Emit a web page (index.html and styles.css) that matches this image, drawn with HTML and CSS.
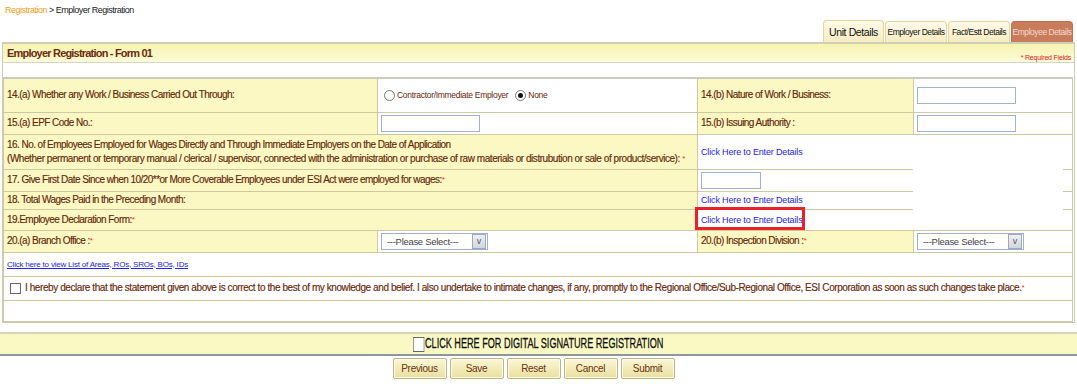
FILE: index.html
```html
<!DOCTYPE html>
<html>
<head>
<meta charset="utf-8">
<link rel="stylesheet" href="styles.css">
</head>
<body>
<div class="crumb"><span class="crumb-link">Registration</span> &gt; Employer Registration</div>
<div class="tabs">
  <div class="tab tab-big">Unit Details</div>
  <div class="tab">Employer Details</div>
  <div class="tab">Fact/Estt Details</div>
  <div class="tab tab-active">Employee Details</div>
</div>
<div class="panel">
  <div class="panel-head">
    <span class="panel-title">Employer Registration - Form 01</span>
    <span class="req">* Required Fields</span>
  </div>
  <div class="panel-body">
    <table class="form">
      <colgroup><col class="c1"><col class="c2"><col class="c3"><col class="c4"></colgroup>
      <tr class="r14">
        <td class="lbl">14.(a) Whether any Work / Business Carried Out Through:</td>
        <td class="val"><span class="radio"></span><span class="small">Contractor/Immediate Employer</span><span class="radio on"></span><span class="small">None</span></td>
        <td class="lbl">14.(b) Nature of Work / Business:</td>
        <td class="val"><span class="inp w100"></span></td>
      </tr>
      <tr class="r15">
        <td class="lbl">15.(a) EPF Code No.:</td>
        <td class="val"><span class="inp w100"></span></td>
        <td class="lbl">15.(b) Issuing Authority :</td>
        <td class="val"><span class="inp w100"></span></td>
      </tr>
      <tr class="r16">
        <td class="lbl" colspan="2">16. No. of Employees Employed for Wages Directly and Through Immediate Employers on the Date of Application<br><span class="wide">(Whether permanent or temporary manual / clerical / supervisor, connected with the administration or purchase of raw materials or distrubution or sale of product/service): </span><span class="star">*</span></td>
        <td class="val" colspan="2"><span class="lnk">Click Here to Enter Details</span></td>
      </tr>
      <tr class="r17">
        <td class="lbl" colspan="2">17. Give First Date Since when 10/20**or More Coverable Employees under ESI Act were employed for wages:<span class="star">*</span></td>
        <td class="val"><span class="inp w60"></span></td>
        <td class="val"></td>
      </tr>
      <tr class="r18">
        <td class="lbl" colspan="2">18. Total Wages Paid in the Preceding Month:</td>
        <td class="val"><span class="lnk">Click Here to Enter Details</span></td>
        <td class="val"></td>
      </tr>
      <tr class="r19">
        <td class="lbl" colspan="2">19.Employee Declaration Form:<span class="star">*</span></td>
        <td class="val"><span class="lnk">Click Here to Enter Details</span></td>
        <td class="val"></td>
      </tr>
      <tr class="r20">
        <td class="lbl">20.(a) Branch Office :<span class="star">*</span></td>
        <td class="val"><span class="sel">---Please Select---<span class="arrow">v</span></span></td>
        <td class="lbl">20.(b) Inspection Division :<span class="star">*</span></td>
        <td class="val"><span class="sel">---Please Select---<span class="arrow">v</span></span></td>
      </tr>
      <tr class="r21">
        <td class="val" colspan="4"><span class="lnk lnk-sm">Click here to view List of Areas, ROs, SROs, BOs, IDs</span></td>
      </tr>
      <tr class="r22">
        <td class="val decl" colspan="4"><span class="chk"></span>I hereby declare that the statement given above is correct to the best of my knowledge and belief. I also undertake to intimate changes, if any, promptly to the Regional Office/Sub-Regional Office, ESI Corporation as soon as such changes take place.<span class="star">*</span></td>
      </tr>
      <tr class="r23">
        <td class="val" colspan="4"></td>
      </tr>
    </table>
    <div class="blank-over"></div>
    <div class="redbox"></div>
  </div>
</div>
<div class="sigbar"><span class="sig-text"><span class="chk big"></span>CLICK HERE FOR DIGITAL SIGNATURE REGISTRATION</span></div>
<div class="buttons">
  <span class="btn">Previous</span>
  <span class="btn">Save</span>
  <span class="btn">Reset</span>
  <span class="btn">Cancel</span>
  <span class="btn">Submit</span>
</div>
</body>
</html>
```
FILE: styles.css
```css
* { box-sizing: border-box; }
body {
  margin: 0;
  width: 1077px;
  height: 384px;
  overflow: hidden;
  background: #fff;
  font-family: "Liberation Sans", Arial, sans-serif;
  font-size: 10px;
  color: #000;
}
.crumb {
  padding: 5px 0 0 5px;
  height: 18px;
  font-size: 9px;
  letter-spacing: -0.5px;
  color: #222;
}
.crumb-link { color: #f0a020; }
.tabs {
  display: flex;
  justify-content: flex-end;
  gap: 1px;
  padding-right: 4px;
  height: 24px;
  align-items: flex-end;
}
.tab {
  width: 62px;
  height: 21px;
  border: 1px solid #e6d3a0;
  border-bottom: none;
  border-radius: 4px 4px 0 0;
  background: linear-gradient(#fffbe8, #f6ebc2);
  font-size: 8.5px;
  letter-spacing: -0.45px;
  display: flex;
  align-items: center;
  justify-content: center;
  white-space: nowrap;
  color: #111;
}
.tab-big { font-size: 10.5px; letter-spacing: -0.4px; height: 22px; width: 61px; }
.tab-active {
  background: #c87c5c;
  border-color: #c07050;
  color: #f6d8cc;
}
.panel {
  margin: 0 2px 0 2px;
  border: 1px solid #cbcbb8;
  border-top: none;
  width: 1073px;
}
.panel-head {
  height: 21px;
  border-top: 2px solid #cfcfb8;
  border-bottom: 1px solid #d6d6c0;
  background: linear-gradient(#f7f3b0, #fcfbd8);
  display: flex;
  justify-content: space-between;
  align-items: flex-start;
  padding: 2px 3px 0 4px;
}
.panel-title {
  font-weight: bold;
  font-size: 11px;
  letter-spacing: -0.8px;
  color: #6b2c0c;
  padding-top: 1px;
}
.req {
  color: #e02020;
  font-size: 7px;
  letter-spacing: -0.2px;
  padding-top: 8px;
}
.panel-body {
  position: relative;
  padding-top: 14px;
}
.form {
  border-collapse: collapse;
  width: 1069px;
  table-layout: fixed;
  border-top: 2px solid #cbcbc0;
}
.c1 { width: 374px; }
.c2 { width: 320px; }
.c3 { width: 216px; }
.c4 { width: 159px; }
.form td {
  border: 1px solid #cdc9a2;
  padding: 0 3px;
  vertical-align: middle;
  color: #66280a;
  font-size: 10px;
  letter-spacing: -0.55px;
  line-height: 14px;
  white-space: nowrap;
  -webkit-text-stroke: 0.15px #66280a;
}
.form td.lbl { background: #fbf8c3; }
.form td.val { background: #fff; }
.wide { letter-spacing: -0.45px; }
.r14 td { height: 34px; }
.r15 td { height: 22px; }
.r16 td { height: 35px; }
.r17 td { height: 22px; }
.r18 td { height: 18px; }
.r19 td { height: 21px; }
.r20 td { height: 22px; }
.r21 td { height: 24px; }
.r22 td { height: 24px; }
.r23 td { height: 21px; }
.star { color: #e03030; font-size: 8px; vertical-align: top; -webkit-text-stroke: 0; }
.lnk { color: #2323ee; font-size: 9px; letter-spacing: -0.15px; -webkit-text-stroke: 0; }
.lnk-sm { font-size: 8px; letter-spacing: -0.2px; text-decoration: underline; }
.small { font-size: 8.5px; letter-spacing: -0.3px; vertical-align: middle; margin-right: 4px; -webkit-text-stroke: 0; }
.radio {
  display: inline-block;
  width: 11px;
  height: 11px;
  border: 1px solid #777;
  border-radius: 50%;
  background: #fff;
  vertical-align: middle;
  margin: 0 2px 0 3px;
  position: relative;
}
.radio.on::after {
  content: "";
  position: absolute;
  left: 2px; top: 2px;
  width: 5px; height: 5px;
  border-radius: 50%;
  background: #111;
}
.inp {
  display: inline-block;
  height: 17px;
  border: 1px solid #9fb4cc;
  background: #fff;
  vertical-align: middle;
}
.w100 { width: 99px; }
.w60 { width: 60px; }
.sel {
  display: inline-block;
  position: relative;
  width: 107px;
  height: 17px;
  border: 1px solid #9fb4cc;
  background: #fff;
  color: #444;
  font-size: 9.5px;
  letter-spacing: -0.3px;
  line-height: 15px;
  padding-left: 5px;
  vertical-align: middle;
  -webkit-text-stroke: 0;
}
.arrow {
  position: absolute;
  right: 1px; top: 0px;
  width: 14px; height: 15px;
  border: 1px solid #a0a8b8;
  background: linear-gradient(#eef0f4, #d0d6e0);
  color: #555;
  font-size: 9px;
  line-height: 13px;
  text-align: center;
  letter-spacing: 0;
}
.chk {
  display: inline-block;
  width: 11px;
  height: 11px;
  border: 1px solid #666;
  background: #fff;
  vertical-align: middle;
  margin-right: 4px;
}
.form td.decl { padding-left: 6px; letter-spacing: -0.42px; }
.blank-over {
  position: absolute;
  left: 910px;
  top: 102px;
  width: 150px;
  height: 65px;
  background: #fff;
}
.redbox {
  position: absolute;
  left: 692px;
  top: 144px;
  width: 110px;
  height: 23px;
  border: 3px solid #e8212a;
}
.sigbar {
  margin-top: 9px;
  height: 24px;
  background: #fbf9c3;
  border-top: 2px solid #d6d6b6;
  border-bottom: 2px solid #8c98a0;
  display: flex;
  justify-content: center;
  align-items: center;
  overflow: hidden;
}
.sig-text {
  display: inline-block;
  white-space: nowrap;
  font-size: 14px;
  color: #111;
  -webkit-text-stroke: 0.3px #111;
  transform: scaleX(0.65);
}
.chk.big { width: 17px; height: 15px; margin-right: 1px; -webkit-text-stroke: 0; }
.buttons {
  display: flex;
  justify-content: center;
  gap: 3px;
  padding-top: 2px;
  padding-right: 10px;
}
.btn {
  width: 54px;
  height: 21px;
  border: 1px solid #bcb484;
  border-radius: 2px;
  background: linear-gradient(#fbf7d6, #e9df9e);
  box-shadow: inset 0 0 0 1px #fffbe6;
  color: #6b3412;
  font-size: 10px;
  letter-spacing: -0.3px;
  display: flex;
  align-items: center;
  justify-content: center;
}
```
